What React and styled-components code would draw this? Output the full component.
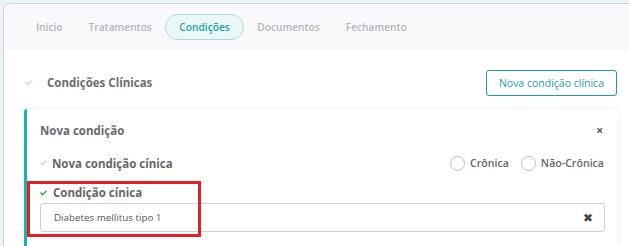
import React from "react";
import styled, { createGlobalStyle } from "styled-components";

const GlobalStyle = createGlobalStyle`
  html, body { margin: 0; padding: 0; }
  body {
    background: #eaf6f6;
    font-family: "Open Sans", "Noto Sans", sans-serif;
    width: 629px;
    height: 246px;
    overflow: hidden;
  }
`;

const Page = styled.div`
  position: relative;
  padding: 3px 0 0 3px;
  height: 246px;
  box-sizing: border-box;
  overflow: hidden;
`;

const Card = styled.div`
  width: 650px;
  height: 300px;
  border: 1px solid #cbd4d6;
  border-right: none;
  border-radius: 7px 0 0 0;
  background: #fff;
  overflow: hidden;
`;

const TabBar = styled.div`
  height: 46px;
  background: #f9f9fc;
  display: flex;
  align-items: center;
  padding-left: 19px;
`;

const Tab = styled.div`
  font-size: 10.2px;
  font-weight: 600;
  line-height: 14px;
  padding: ${(p) => (p.$active ? "5px 13.5px" : "5px 12px")};
  border-radius: 13px;
  border: 1px solid ${(p) => (p.$active ? "#a6dcdc" : "transparent")};
  background: ${(p) => (p.$active ? "#ebf7f7" : "transparent")};
  color: ${(p) => (p.$active ? "#17a2a8" : "#b4b4b8")};
`;

const Body = styled.div`
  padding: 20px 0 0 20px;
  width: 594px;
`;

const SectionHead = styled.div`
  display: flex;
  align-items: center;
  justify-content: space-between;
  height: 25px;
`;

const SectionTitle = styled.div`
  display: flex;
  align-items: center;
  gap: 15px;
  padding-left: 1px;
  font-size: 11.5px;
  font-weight: 700;
  color: #6d6d6f;
`;

const CheckSvg = styled.svg`
  width: 7px;
  height: 6px;
  flex: none;
  fill: ${(p) => (p.$on ? "#2aa83a" : "#d3d3d3")};
`;

const Check = ({ on }) => (
  <CheckSvg $on={on} viewBox="0 0 14 11">
    <path d="M0 5.6 L2 3.6 L5.2 6.8 L12 0 L14 2 L5.2 10.8 Z" />
  </CheckSvg>
);

const OutlineButton = styled.button`
  height: 26px;
  padding: 0 12px;
  border: 1px solid #1b9caa;
  border-radius: 3px;
  background: #fff;
  color: #1b9caa;
  font-family: inherit;
  font-size: 10.5px;
  margin-right: 1px;
`;

const Panel = styled.div`
  margin-top: 14px;
  background: #fff;
  border-left: 3px solid #17b4ac;
  border-radius: 3px 5px 0 0;
  box-shadow: 0 0 6px rgba(0, 0, 0, 0.08);
  padding: 12px 13px 20px 13px;
`;

const PanelHead = styled.div`
  display: flex;
  align-items: center;
  justify-content: space-between;
  height: 18px;
`;

const PanelTitle = styled.div`
  font-size: 11.5px;
  font-weight: 700;
  color: #6a6a6c;
`;

const Close = styled.span`
  font-size: 12px;
  font-weight: 700;
  color: #555;
  margin-right: 2px;
`;

const Row = styled.div`
  display: flex;
  align-items: center;
  justify-content: space-between;
  margin-top: 15px;
  height: 18px;
`;

const Label = styled.div`
  display: flex;
  align-items: center;
  gap: ${(p) => (p.$wide ? "6px" : "5px")};
  font-size: 11.5px;
  font-weight: 700;
  color: #666;
`;

const RadioGroup = styled.div`
  display: flex;
  align-items: center;
  gap: 12px;
  margin-right: 1px;
`;

const RadioItem = styled.label`
  display: flex;
  align-items: center;
  gap: 5px;
  font-size: 10.6px;
  font-weight: 600;
  color: #666;
`;

const Circle = styled.span`
  width: 15px;
  height: 15px;
  box-sizing: border-box;
  border: 1px solid #bdbdbd;
  border-radius: 50%;
  background: #fff;
`;

const Field = styled.div`
  margin-top: 13px;
`;

const InputBox = styled.div`
  margin-top: 3px;
  height: 27px;
  border: 1px solid #cfcfcf;
  border-radius: 3px;
  display: flex;
  align-items: center;
  justify-content: space-between;
  padding: 0 11px 0 13px;
  font-size: 9.8px;
  color: #555;
`;

const Clear = styled.span`
  font-size: 12px;
  color: #444;
`;

const Highlight = styled.div`
  position: absolute;
  left: 27px;
  top: 181px;
  width: 168px;
  height: 50px;
  border: 3px solid #e31e24;
  pointer-events: none;
`;

const tabs = ["Início", "Tratamentos", "Condições", "Documentos", "Fechamento"];

export default function App() {
  return (
    <>
      <GlobalStyle />
      <Page>
        <Card>
          <TabBar>
            {tabs.map((t) => (
              <Tab key={t} $active={t === "Condições"}>
                {t}
              </Tab>
            ))}
          </TabBar>
          <Body>
            <SectionHead>
              <SectionTitle>
                <Check />
                Condições Clínicas
              </SectionTitle>
              <OutlineButton>Nova condição clínica</OutlineButton>
            </SectionHead>
            <Panel>
              <PanelHead>
                <PanelTitle>Nova condição</PanelTitle>
                <Close>×</Close>
              </PanelHead>
              <Row>
                <Label>
                  <Check />
                  Nova condição cínica
                </Label>
                <RadioGroup>
                  <RadioItem>
                    <Circle />
                    Crônica
                  </RadioItem>
                  <RadioItem>
                    <Circle />
                    Não-Crônica
                  </RadioItem>
                </RadioGroup>
              </Row>
              <Field>
                <Label $wide>
                  <Check on />
                  Condição cínica
                </Label>
                <InputBox>
                  Diabetes mellitus tipo 1
                  <Clear>✖</Clear>
                </InputBox>
              </Field>
            </Panel>
          </Body>
        </Card>
        <Highlight />
      </Page>
    </>
  );
}
